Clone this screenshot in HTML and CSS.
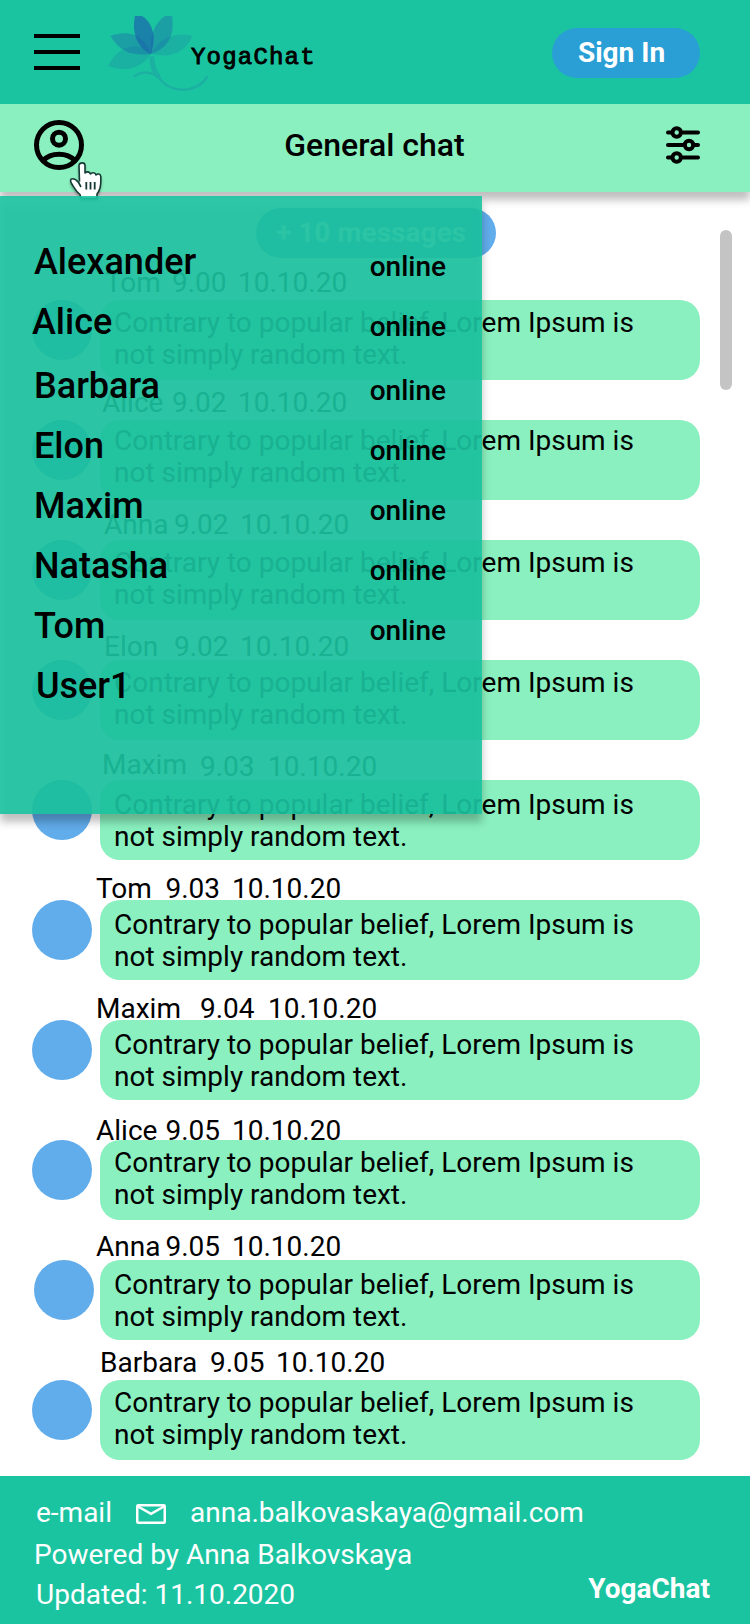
FILE: index.html
```html
<!DOCTYPE html>
<html lang="en">
<head>
<meta charset="utf-8">
<title>YogaChat</title>
<link rel="stylesheet" href="styles.css">
</head>
<body>
<div class="page">
  <header class="topbar">
    <button class="burger" aria-label="Menu"><span></span><span></span><span></span></button>
    <svg class="lotus" width="104" height="80" viewBox="106 14 104 80">
      <g fill="#1b66aa">
        <path opacity=".2" d="M108 66C117 47 138 39 151 54C143 67 126 73 108 66Z"/>
        <path opacity=".2" d="M192.500 36C180 32 160 35 151 54C170 58 184 54 192.500 36Z"/>
        <path opacity=".4" d="M110.500 36C124 31 143 31 151 54C134 56 120 53 110.500 36Z"/>
        <path opacity=".4" d="M165 16H172C174.500 32 171 47 151 54C149 38 154 23 165 16Z"/>
        <path opacity=".72" d="M135 16H142C152 22 157 36 151 54C139 49 131 35 135 16Z"/>
      </g>
      <g fill="none" stroke="#1b66aa" stroke-linecap="round" opacity=".2">
        <path stroke-width="5" d="M152 58.500C152 66 154 71 158 76"/>
        <path stroke-width="2.500" d="M158 76C169 95 197 93 207 77M134.500 76C142 71 150 72 157 76"/>
      </g>
    </svg>
    <span class="wordmark">YogaChat</span>
    <button class="sign-in">Sign In</button>
  </header>

  <div class="chatbar">
    <svg class="person" width="50" height="50" viewBox="0 0 50 50" fill="none" stroke="#000" stroke-width="5">
      <circle cx="25" cy="25" r="22.500"/>
      <circle cx="25" cy="18.700" r="6.500"/>
      <path d="M9 40.500C17 32 33 32 41 40.500"/>
    </svg>
    <h1 class="title">General chat</h1>
    <svg class="sliders" width="34" height="38" viewBox="0 0 34 38" fill="none" stroke="#000" stroke-width="4" stroke-linecap="round">
      <path d="M2 6.500H5M17 6.500H32M2 19H18M29 19H32M2 31.500H5M17 31.500H32"/>
      <circle cx="10.700" cy="6.500" r="4.200"/>
      <circle cx="23" cy="19" r="4.200"/>
      <circle cx="10.700" cy="31.500" r="4.200"/>
    </svg>
    <svg class="pointer" width="40" height="48" viewBox="66 158 40 48">
      <path d="M81 187L78.500 182.500C77 180.500 74.500 178.500 72 178.700C70 179 70.500 181.500 71.500 183.500C74 187 75 190.500 80 194.500L81 198.500H97V194C100.500 189.500 101 185 100.800 180V176.500C100.500 173.500 97.500 173.500 96 175C95.500 172.500 92 172 90.500 174C89.500 171.500 86.500 171.200 85 173V165.500C85 162 79.500 162 79 165.500L79.500 181.500" fill="#fff" stroke="#163b36" stroke-width="1.600" stroke-linejoin="round"/>
      <path d="M86.300 182V189.500M90.500 182V189.500M94.700 182V189.500" stroke="#163b36" stroke-width="1.800"/>
    </svg>
  </div>

  <main class="chat">
    <div class="more">+ 10 messages</div>
    <div class="scrollbar"></div>
    <section class="messages">
      <article class="message m-tom-early"><div class="meta"><span>Tom</span><span>9.00</span><span>10.10.20</span></div><div class="avatar"></div><p class="bubble">Contrary to popular belief, Lorem Ipsum is not simply random text.</p></article>
      <article class="message m-alice-early"><div class="meta"><span>Alice</span><span>9.02</span><span>10.10.20</span></div><div class="avatar"></div><p class="bubble">Contrary to popular belief, Lorem Ipsum is not simply random text.</p></article>
      <article class="message m-anna-early"><div class="meta"><span>Anna</span><span>9.02</span><span>10.10.20</span></div><div class="avatar"></div><p class="bubble">Contrary to popular belief, Lorem Ipsum is not simply random text.</p></article>
      <article class="message m-elon"><div class="meta"><span>Elon</span><span>9.02</span><span>10.10.20</span></div><div class="avatar"></div><p class="bubble">Contrary to popular belief, Lorem Ipsum is not simply random text.</p></article>
      <article class="message m-maxim-early"><div class="meta"><span>Maxim</span><span>9.03</span><span>10.10.20</span></div><div class="avatar"></div><p class="bubble">Contrary to popular belief, Lorem Ipsum is not simply random text.</p></article>
      <article class="message m-tom"><div class="meta"><span>Tom</span><span>9.03</span><span>10.10.20</span></div><div class="avatar"></div><p class="bubble">Contrary to popular belief, Lorem Ipsum is not simply random text.</p></article>
      <article class="message m-maxim"><div class="meta"><span>Maxim</span><span>9.04</span><span>10.10.20</span></div><div class="avatar"></div><p class="bubble">Contrary to popular belief, Lorem Ipsum is not simply random text.</p></article>
      <article class="message m-alice"><div class="meta"><span>Alice</span><span>9.05</span><span>10.10.20</span></div><div class="avatar"></div><p class="bubble">Contrary to popular belief, Lorem Ipsum is not simply random text.</p></article>
      <article class="message m-anna"><div class="meta"><span>Anna</span><span>9.05</span><span>10.10.20</span></div><div class="avatar"></div><p class="bubble">Contrary to popular belief, Lorem Ipsum is not simply random text.</p></article>
      <article class="message m-barbara"><div class="meta"><span>Barbara</span><span>9.05</span><span>10.10.20</span></div><div class="avatar"></div><p class="bubble">Contrary to popular belief, Lorem Ipsum is not simply random text.</p></article>
    </section>
  </main>

  <aside class="users">
    <ul class="user-list">
      <li class="user"><span class="name">Alexander</span><span class="status">online</span></li>
      <li class="user outdent"><span class="name">Alice</span><span class="status">online</span></li>
      <li class="user spaced"><span class="name">Barbara</span><span class="status">online</span></li>
      <li class="user"><span class="name">Elon</span><span class="status">online</span></li>
      <li class="user"><span class="name">Maxim</span><span class="status">online</span></li>
      <li class="user"><span class="name">Natasha</span><span class="status">online</span></li>
      <li class="user"><span class="name">Tom</span><span class="status">online</span></li>
      <li class="user indent"><span class="name">User1</span></li>
    </ul>
  </aside>

  <footer class="footer">
    <div class="contacts">
      <div class="mail-row">
        <span class="mail-label">e-mail</span>
        <svg class="envelope" width="30" height="20" viewBox="0 0 30 20" fill="none" stroke="#fff" stroke-width="2.500">
          <rect x="1.250" y="1.250" width="27.500" height="17.500" rx="1"/>
          <path d="M2 2.500L15 9.800L28 2.500"/>
        </svg>
        <span>anna.balkovaskaya@gmail.com</span>
      </div>
      <div class="powered">Powered by Anna Balkovskaya</div>
      <div class="updated">Updated: 11.10.2020</div>
    </div>
    <div class="brand">YogaChat</div>
  </footer>
</div>
</body>
</html>
```
FILE: styles.css
```css
* { box-sizing: border-box; }

body {
  margin: 0;
  background: #fff;
  color: #000;
  font: 400 28px/32px Roboto, sans-serif;
}

button { border: 0; padding: 0; font: inherit; }

.page {
  position: relative;
  display: flex;
  flex-direction: column;
  width: 750px;
  height: 1624px;
  overflow: hidden;
}

/* Top bar */
.topbar {
  display: flex;
  align-items: flex-start;
  height: 104px;
  padding: 0 50px 0 34px;
  background: #1bc4a1;
}

.burger {
  display: flex;
  flex-direction: column;
  gap: 12px;
  width: 46px;
  margin-top: 34px;
  background: none;
}

.burger span { height: 4px; background: #000; }

.lotus { margin: 14px 0 0 26px; }

.wordmark {
  margin: 42px 0 0 -19px;
  font: 400 24px/32px "Liberation Mono", monospace;
  letter-spacing: 1.200px;
  -webkit-text-stroke: .9px #000;
}

.sign-in {
  width: 148px;
  height: 50px;
  margin: 28px 0 0 auto;
  padding-right: 9px;
  border-radius: 25px;
  background: #299fd6;
  color: #fff;
  font-weight: 700;
}

/* Chat title bar */
.chatbar {
  position: relative;
  z-index: 1;
  display: flex;
  align-items: center;
  justify-content: space-between;
  height: 88px;
  padding: 0 50px 0 34px;
  background: #8af0bf;
  box-shadow: 0 8px 8px rgba(0, 0, 0, .25);
}

.person { margin-bottom: 6px; }

.title { margin: 0 1px 6px 0; font-size: 32px; font-weight: 500; line-height: 38px; }

.sliders { margin-bottom: 6px; }

.pointer {
  position: absolute;
  left: 66px;
  top: 54px;
  filter: drop-shadow(0 2px 1px rgba(0, 0, 0, .3));
}

/* Messages */
.chat { position: relative; height: 1284px; padding-top: 16px; }

.more {
  width: 240px;
  height: 50px;
  margin-left: 256px;
  padding-left: 20px;
  border-radius: 25px;
  background: #61aceb;
  color: #fff;
  font-weight: 700;
  line-height: 50px;
}

.scrollbar {
  position: absolute;
  right: 18px;
  top: 38px;
  width: 12px;
  height: 160px;
  border-radius: 6px;
  background: #c4c4c4;
}

.messages { padding-top: 2px; }

.message {
  --name-x: 96px;
  --time-x: 165.500px;
  --date-x: 232px;
  --meta-y: 13px;
  --text-y: 9px;
  --avatar-x: 32px;
  display: grid;
  grid-template: 40px 80px / 100px 600px;
  height: 120px;
}

.meta {
  grid-column: 1 / -1;
  display: grid;
  grid-template-columns: calc(var(--time-x) - var(--name-x)) calc(var(--date-x) - var(--time-x)) auto;
  padding: var(--meta-y) 0 0 var(--name-x);
  white-space: nowrap;
}

.avatar {
  width: 60px;
  height: 60px;
  margin-left: var(--avatar-x);
  border-radius: 50%;
  background: #61aceb;
}

.bubble {
  margin: 0;
  padding: var(--text-y) 50px 0 14px;
  border-radius: 20px;
  background: #8af0bf;
}

.m-tom-early { --name-x: 105px; --time-x: 172px; --date-x: 238px; --meta-y: 7px; --text-y: 7px; }
.m-alice-early { --name-x: 102px; --time-x: 172px; --date-x: 238px; --meta-y: 7px; --text-y: 5px; }
.m-anna-early { --name-x: 104px; --time-x: 174px; --date-x: 240px; --meta-y: 9px; --text-y: 7px; }
.m-elon { --name-x: 104px; --time-x: 174px; --date-x: 240px; --meta-y: 11px; --text-y: 7px; }
.m-maxim-early { --name-x: 102px; --time-x: 200px; --date-x: 268px; --meta-y: 11px; }
.m-maxim-early .meta span:first-child { margin-top: -2px; }
.m-maxim { --time-x: 200px; --date-x: 268px; }
.m-alice { --meta-y: 15px; --text-y: 7px; }
.m-anna { --meta-y: 11px; --avatar-x: 34px; }
.m-barbara { --name-x: 100px; --time-x: 210px; --date-x: 276px; --meta-y: 7px; --text-y: 7px; }

/* Users dropdown, laid over the chat */
.users {
  position: absolute;
  z-index: 2;
  left: 0;
  top: 196px;
  width: 482px;
  height: 618px;
  padding: 45px 36px 0 34px;
}

.users::before,
.users::after {
  content: "";
  position: absolute;
  z-index: -1;
  inset: 0;
}

.users::before {
  top: 8px;
  bottom: -8px;
  background: rgba(0, 0, 0, .25);
  filter: blur(4px);
}

.users::after { background: rgba(27, 196, 161, .9); }

.user-list { margin: 0; padding: 0; list-style: none; }

.user {
  display: flex;
  justify-content: space-between;
  height: 60px;
  font-weight: 500;
}

.name { font-size: 36px; line-height: 42px; }
.status { padding-top: 10px; }
.outdent .name { margin-left: -2px; }
.indent .name { margin-left: 2px; }
.spaced { height: 64px; padding-top: 4px; }

/* Footer */
.footer {
  display: flex;
  justify-content: space-between;
  height: 148px;
  padding: 21px 40px 0 34px;
  background: #1bc4a1;
  color: #fff;
}

.mail-row { display: flex; align-items: center; height: 32px; padding-left: 2px; }
.mail-label { width: 100px; }
.envelope { margin: 2px 24px 0 0; }
.powered { margin-top: 10px; }
.updated { margin: 8px 0 0 2px; }
.brand { margin-top: 76px; font-weight: 700; }
```
